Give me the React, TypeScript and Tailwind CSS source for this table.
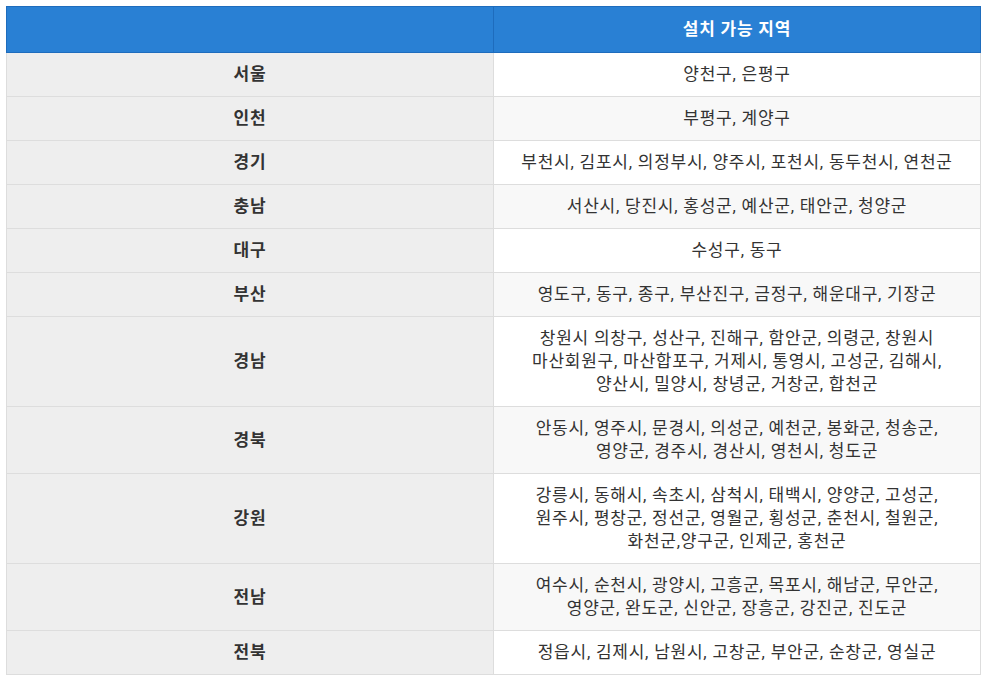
const rows: [string, string[]][] = [
  ["서울", ["양천구, 은평구"]],
  ["인천", ["부평구, 계양구"]],
  ["경기", ["부천시, 김포시, 의정부시, 양주시, 포천시, 동두천시, 연천군"]],
  ["충남", ["서산시, 당진시, 홍성군, 예산군, 태안군, 청양군"]],
  ["대구", ["수성구, 동구"]],
  ["부산", ["영도구, 동구, 종구, 부산진구, 금정구, 해운대구, 기장군"]],
  [
    "경남",
    [
      "창원시 의창구, 성산구, 진해구, 함안군, 의령군, 창원시",
      "마산회원구, 마산합포구, 거제시, 통영시, 고성군, 김해시,",
      "양산시, 밀양시, 창녕군, 거창군, 합천군",
    ],
  ],
  [
    "경북",
    [
      "안동시, 영주시, 문경시, 의성군, 예천군, 봉화군, 청송군,",
      "영양군, 경주시, 경산시, 영천시, 청도군",
    ],
  ],
  [
    "강원",
    [
      "강릉시, 동해시, 속초시, 삼척시, 태백시, 양양군, 고성군,",
      "원주시, 평창군, 정선군, 영월군, 횡성군, 춘천시, 철원군,",
      "화천군,양구군, 인제군, 홍천군",
    ],
  ],
  [
    "전남",
    [
      "여수시, 순천시, 광양시, 고흥군, 목포시, 해남군, 무안군,",
      "영양군, 완도군, 신안군, 장흥군, 강진군, 진도군",
    ],
  ],
  ["전북", ["정읍시, 김제시, 남원시, 고창군, 부안군, 순창군, 영실군"]],
];

export default function App() {
  return (
    <div className="min-h-screen bg-white pt-[6px] pl-[6px] font-['Roboto','Noto_Sans_CJK_KR',sans-serif] text-[17px] leading-[23px] tracking-[0.75px] text-[#333]">
      <table className="w-[975px] table-fixed border-collapse">
        <thead>
          <tr className="bg-[#2980d4] text-white">
            <th className="w-[487px] border border-[#1e6cbd] h-[46px] font-bold"></th>
            <th className="border border-[#1e6cbd] h-[46px] font-bold">설치 가능 지역</th>
          </tr>
        </thead>
        <tbody>
          {rows.map(([region, lines], i) => (
            <tr key={region}>
              <td className="border border-[#dddddd] bg-[#eeeeee] py-[10px] text-center font-bold">
                {region}
              </td>
              <td
                className={
                  i % 2 === 1
                    ? "border border-[#dddddd] bg-[#f8f8f8] py-[10px] text-center"
                    : "border border-[#dddddd] bg-white py-[10px] text-center"
                }
              >
                {lines.map((l, j) => (
                  <div key={j}>{l}</div>
                ))}
              </td>
            </tr>
          ))}
        </tbody>
      </table>
    </div>
  );
}
